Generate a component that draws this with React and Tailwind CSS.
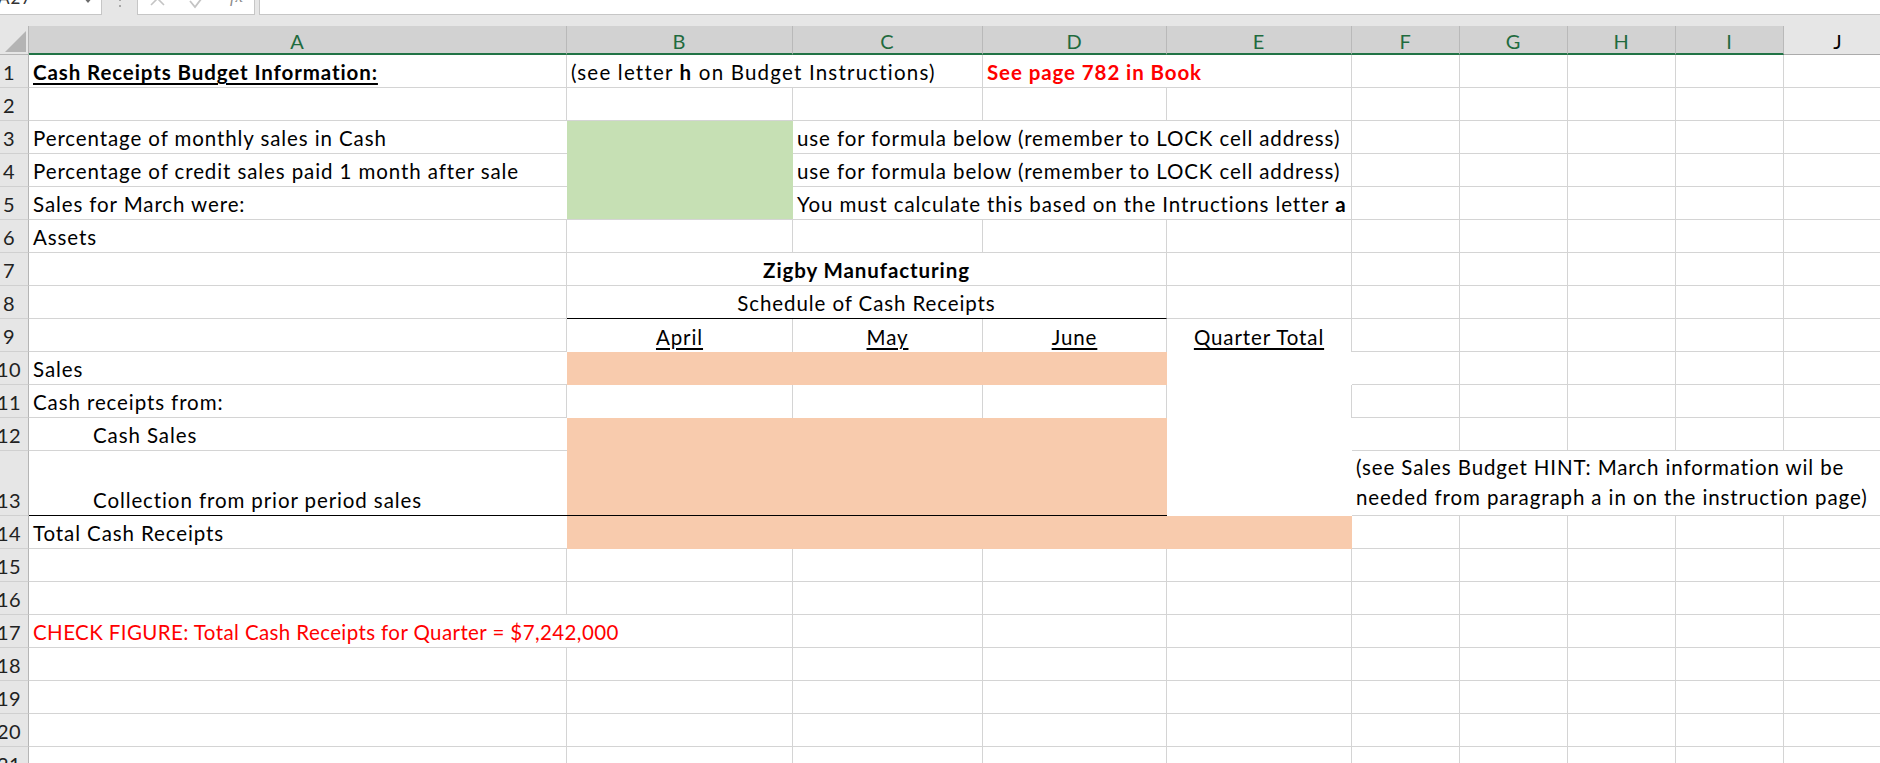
import React from "react";

const GRID =
  "grid grid-cols-[29px_538px_226px_190px_184px_185px_108px_108px_108px_108px_108px]";

const SPAN = { 1: "", 2: "col-span-2", 3: "col-span-3", 4: "col-span-4", 5: "col-span-5" };

const PEACH = "bg-[#f8cbad]";
const GREEN = "bg-[#c6e0b4]";

// one spreadsheet cell; r / b switch the light grid lines off where Excel hides them
const C = ({ s = 1, r = true, b = true, fill = "", bb = false, center = false, className = "", children }) => {
  const cls = [
    "flex items-end whitespace-nowrap px-[4px] pb-[3px] leading-[24px] border-[#d4d4d4]",
    SPAN[s],
    fill,
  ];
  if (r) cls.push("border-r");
  if (b) cls.push("border-b");
  if (bb) cls.push("border-b border-b-black");
  if (center) cls.push("justify-center");
  if (className) cls.push(className);
  return <div className={cls.join(" ")}>{children}</div>;
};

const Empty = ({ n }) =>
  Array.from({ length: n }).map((_, i) => <C key={i} />);

const Row = ({ n, h = "h-[33px]", children }) => (
  <div className={`${GRID} ${h}`}>
    <div className="flex items-end overflow-hidden bg-[#e6e6e6] border-r border-b border-[#d0d0d0] border-r-[#b5b5b5]">
      <div className="w-[40px] shrink-0 -ml-[11px] text-center pb-[3px] leading-[24px] text-[20px] tracking-[0.5px] text-[#222]">
        {n}
      </div>
    </div>
    {children}
  </div>
);

const FormulaBar = () => (
  <div className="h-[26px] bg-[#e6e6e6]">
    <div className="flex h-[15px]">
      <div className="flex w-[102px] justify-between overflow-hidden bg-white border-b border-r border-[#c6c6c6]">
        <div className="-ml-[2px] -mt-[12px] leading-[20px] text-[17px] text-[#333]">A27</div>
        <svg width="14" height="14" viewBox="0 0 14 14" className="mr-[6px]">
          <path d="M2 -3 L12 -3 L7 3 Z" fill="#6b6b6b" />
        </svg>
      </div>
      <div className="flex w-[35px] justify-center">
        <svg width="6" height="14" viewBox="0 0 6 14">
          <rect x="2" y="-1" width="2" height="2" fill="#a6a6a6" />
          <rect x="2" y="5" width="2" height="2" fill="#a6a6a6" />
        </svg>
      </div>
      <div className="flex w-[118px] items-start overflow-hidden bg-white border-b border-x border-[#c6c6c6]">
        <svg width="84" height="14" viewBox="0 0 84 14" className="shrink-0">
          <path d="M13 -8 L26 5 M26 -8 L13 5" stroke="#c4c4c4" strokeWidth="1.6" fill="none" />
          <path d="M52 1 L57 7 L67 -6" stroke="#c4c4c4" strokeWidth="1.8" fill="none" />
        </svg>
        <div className="ml-[8px] -mt-[13px] font-['Liberation_Serif',serif] italic text-[17px] leading-[20px] text-[#8a8a8a]">
          fx
        </div>
      </div>
      <div className="ml-[4px] flex-1 bg-white border-b border-l border-[#c6c6c6]" />
    </div>
  </div>
);

const Header = () => {
  const letters = ["A", "B", "C", "D", "E", "F", "G", "H", "I"];
  return (
    <div className={`${GRID} h-[29px]`}>
      <div className="flex items-end justify-end bg-[#e6e6e6] border-r border-b border-[#b5b5b5]">
        <svg width="26" height="26" viewBox="0 0 26 26">
          <path d="M24 3 L24 24 L3 24 Z" fill="#b4b4b4" />
        </svg>
      </div>
      {letters.map((l) => (
        <div
          key={l}
          className="flex items-center justify-center bg-[#d2d2d2] border-r border-[#b9b9b9] border-b-2 border-b-[#217346] text-[20px] leading-[24px] text-[#1f6b3e] pt-[2px]"
        >
          {l}
        </div>
      ))}
      <div className="flex items-center justify-center bg-[#e6e6e6] border-b border-[#ababab] text-[20px] leading-[24px] text-black pt-[2px]">
        J
      </div>
    </div>
  );
};

const App = () => (
  <div className="h-[763px] w-[1880px] overflow-hidden bg-white font-['Lato',sans-serif] text-[20.5px] tracking-[0.9px] text-black">
    <FormulaBar />
    <Header />

    <Row n={1}>
      <C className="font-bold underline underline-offset-[3px]">Cash Receipts Budget Information:</C>
      <C s={2} className="tracking-[1.2px]">
        (see letter&nbsp;<b>h</b>&nbsp;on Budget Instructions)
      </C>
      <C s={2} className="font-bold text-[#ff0000]">See page 782 in Book</C>
      <Empty n={5} />
    </Row>
    <Row n={2}>
      <Empty n={10} />
    </Row>
    <Row n={3}>
      <C r={false}>Percentage of monthly sales in Cash</C>
      <C fill={GREEN} r={false} b={false} />
      <C s={3}>use for formula below (remember to LOCK cell address)</C>
      <Empty n={5} />
    </Row>
    <Row n={4}>
      <C r={false}>Percentage of credit sales paid 1 month after sale</C>
      <C fill={GREEN} r={false} b={false} />
      <C s={3}>use for formula below (remember to LOCK cell address)</C>
      <Empty n={5} />
    </Row>
    <Row n={5}>
      <C r={false}>Sales for March were:</C>
      <C fill={GREEN} r={false} />
      <C s={3}>
        You must calculate this based on the Intructions letter&nbsp;<b>a</b>
      </C>
      <Empty n={5} />
    </Row>
    <Row n={6}>
      <C>Assets</C>
      <Empty n={9} />
    </Row>
    <Row n={7}>
      <C />
      <C s={3} center className="font-bold">Zigby Manufacturing</C>
      <Empty n={6} />
    </Row>
    <Row n={8}>
      <C />
      <C s={3} center bb>Schedule of Cash Receipts</C>
      <Empty n={6} />
    </Row>
    <Row n={9}>
      <C />
      <C center b={false} className="underline underline-offset-[3px]">April</C>
      <C center b={false} className="underline underline-offset-[3px]">May</C>
      <C center b={false} className="underline underline-offset-[3px]">June</C>
      <C center b={false} className="underline underline-offset-[3px]">Quarter Total</C>
      <Empty n={5} />
    </Row>
    <Row n={10}>
      <C r={false}>Sales</C>
      <C s={3} fill={PEACH} r={false} b={false} />
      <C fill="bg-white" r={false} b={false} />
      <Empty n={5} />
    </Row>
    <Row n={11}>
      <C>Cash receipts from:</C>
      <C b={false} />
      <C b={false} />
      <C b={false} />
      <C b={false} />
      <Empty n={5} />
    </Row>
    <Row n={12}>
      <C r={false} className="pl-[64px]">Cash Sales</C>
      <C s={3} fill={PEACH} r={false} b={false} />
      <C fill="bg-white" r={false} b={false} />
      <Empty n={5} />
    </Row>
    <Row n={13} h="h-[65px]">
      <C r={false} bb className="pl-[64px]">Collection from prior period sales</C>
      <C s={3} fill={PEACH} r={false} bb />
      <C fill="bg-white" r={false} b={false} />
      <C s={5} r={false} className="pb-0 leading-[30px]">
        <div>
          (see Sales Budget HINT: March information wil be
          <br />
          needed from paragraph a in on the instruction page)
        </div>
      </C>
    </Row>
    <Row n={14}>
      <C r={false}>Total Cash Receipts</C>
      <C s={4} fill={PEACH} r={false} b={false} />
      <Empty n={5} />
    </Row>
    <Row n={15}>
      <Empty n={10} />
    </Row>
    <Row n={16}>
      <Empty n={10} />
    </Row>
    <Row n={17}>
      <C s={2} className="tracking-[0.4px] text-[#ff0000]">
        CHECK FIGURE: Total Cash Receipts for Quarter = $7,242,000
      </C>
      <Empty n={8} />
    </Row>
    <Row n={18}>
      <Empty n={10} />
    </Row>
    <Row n={19}>
      <Empty n={10} />
    </Row>
    <Row n={20}>
      <Empty n={10} />
    </Row>
    <Row n={21}>
      <Empty n={10} />
    </Row>
  </div>
);

export default App;
